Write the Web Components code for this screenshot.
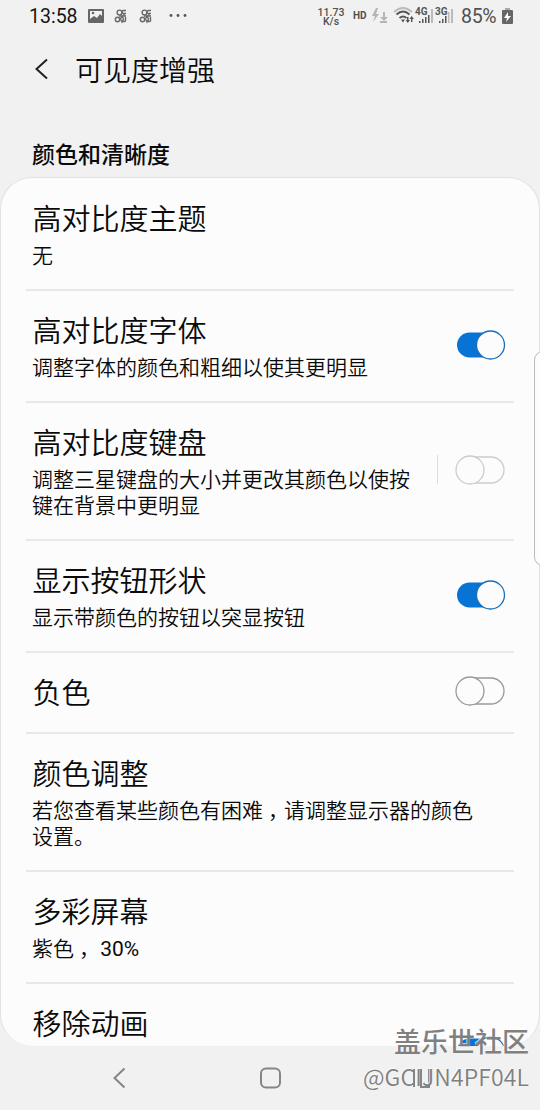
<!DOCTYPE html>
<html lang="zh-CN">
<head>
<meta charset="utf-8">
<title>可见度增强</title>
<style>
  html, body {
    margin: 0;
    width: 540px;
    height: 1110px;
    overflow: hidden;
    background: #f1f1f1;
    color: #0a0a0a;
    font-family: Roboto, "Noto Sans CJK SC", sans-serif;
  }
</style>
</head>
<body>
<settings-screen></settings-screen>

<script>
function define(name, html, setup) {
  customElements.define(name, class extends HTMLElement {
    constructor() {
      super();
      this.attachShadow({ mode: 'open' }).innerHTML = html;
      if (setup) setup(this);
    }
  });
}

define('status-bar', `
  <style>
    :host { display: flex; align-items: center; height: 33px; padding: 0 27px 0 29px; color: #505050; }
    .time { font-size: 19.5px; color: #151515; width: 59px; white-space: nowrap; line-height: 34px; }
    .speed { font-size: 10.5px; font-weight: 500; text-align: center; width: 28px; margin-left: auto; }
    .speed span { display: block; line-height: 9px; }
    .hd { font-size: 10px; font-weight: 700; margin-left: 8px; width: 18px; line-height: 12px; margin-bottom: 1px; }
    .percent { font-size: 19.5px; width: 41px; line-height: 35px; white-space: nowrap; letter-spacing: -.3px; }
    svg { display: block; flex: none; }
  </style>
  <span class="time">13:58</span>
  <svg width="102" height="33">
    <path fill="#666" fill-rule="evenodd" d="M1 9h14q1 0 1 1v12q0 1-1 1H1q-1 0-1-1V10q0-1 1-1zM2 11v8l4-3 3 2 3-4 2 2v-5z"/>
    <circle cx="5" cy="13" r="1.3" fill="#666"/>
    <g id="fan" fill="none" stroke="#6a6a6a" stroke-width="1.4">
      <circle cx="31.5" cy="12.5" r="2.4"/><path d="M38 10.5h-3q-2 2 0 3h3M31 16h7M36 13v3"/>
      <circle cx="29.5" cy="19.5" r="2.2"/><path d="M34 16l-1.500 3 1.500 3 1.500-3zM37.500 17v4q-1 1-3 0"/>
    </g>
    <use href="#fan" x="25"/>
    <g fill="#555"><circle cx="83" cy="15.5" r="1.4"/><circle cx="90" cy="15.5" r="1.4"/><circle cx="97" cy="15.5" r="1.4"/></g>
  </svg>
  <span class="speed"><span>11.73</span><span>K/s</span></span>
  <span class="hd">HD</span>
  <svg width="90" height="33" font-family="Roboto" font-size="10" font-weight="700" fill="#555">
    <path fill="#b5b5b5" d="M5 8L1 16h3L2 22l6-8H5l2-6zM12 12h2v5h3l-4 4-4-4h3zM9 21h7v2H9z"/>
    <g fill="none" stroke-width="1.8">
      <path stroke="#bbb" d="M23 12q9-8 18 0"/>
      <path stroke="#555" d="M25.5 14.5q6.5-6 13 0M28.5 18q3.5-3 7 0"/>
    </g>
    <path d="M30 19.5h4l-2 3zM36 17h1.500v3h1.500l-2.200 3-2.200-3H36zM40 22v-3h-1.500l2.200-3 2.200 3h-1.500v3z"/>
    <text x="44" y="15">4G</text><text x="64" y="15">3G</text>
    <path d="M48 21h1.500v2H48zM51 19h1.500v4H51zM54 17h1.500v6H54zM57 15h1.500v8H57zM68 21h1.500v2H68zM71 19h1.500v4H71zM74 16h1.500v7H74z"/>
    <path fill="#bbb" d="M60 9h2v14h-2zM77 12h1.500v11H77zM80 9h2v14h-2z"/>
  </svg>
  <span class="percent">85%</span>
  <svg width="11" height="33">
    <path fill="#666" d="M1 10h9q1 0 1 1v12q0 1-1 1H1q-1 0-1-1V11q0-1 1-1z"/><path fill="#aaa" d="M3 8h5v2H3z"/>
    <path fill="#fff" d="M6 12L2 18h3l-1 4 5-6H6z"/>
  </svg>
`);

define('app-bar', `
  <style>
    :host { display: flex; align-items: center; height: 72px; padding-left: 34px; font-size: 28px; font-weight: 350; }
    svg { margin-right: 26px; }
  </style>
  <svg width="15" height="22" fill="none" stroke="#222" stroke-width="2"><path d="M13 1.5L2.5 11 13 20.5"/></svg>
  <slot></slot>
`);

define('toggle-switch', `
  <style>
    :host { display: block; width: 50px; height: 30px; margin-bottom: 5px; --line: #999; }
    :host([dim]) { --line: #ccc; }
    svg { display: block; overflow: visible; }
    .on { display: none; }
    :host([checked]) .on { display: inline; }
    :host([checked]) .off { display: none; }
  </style>
  <svg width="50" height="30">
    <g class="on">
      <rect x="2" y="2.5" width="46" height="25" rx="12.5" fill="#0673d5"/>
      <circle cx="35.5" cy="15" r="14" fill="#fcfcfc" stroke="#1b6fb8" stroke-width="1.3"/>
    </g>
    <g class="off" fill="#fcfcfc" stroke="var(--line)" stroke-width="1.3">
      <rect x="3" y="2" width="46" height="26" rx="13"/>
      <circle cx="15" cy="15" r="14"/>
    </g>
  </svg>
`);

define('setting-row', `
  <style>
    :host { display: flex; align-items: center; box-sizing: border-box; margin: 0 25px; padding: 20px 9px 17px 7px; border-bottom: 2px solid #e8e8e8; }
    :host([last]) { border: 0; }
    .text { flex: 1; min-width: 0; }
    .title { font-size: 29px; line-height: 42px; font-weight: 350; margin-left: -.5px; }
    ::slotted(p) { margin: 2px 0 3px -1px; font-size: 21px; line-height: 26px; font-weight: 350; white-space: nowrap; }
  </style>
  <div class="text"><div class="title"></div><slot></slot></div>
  <slot name="control"></slot>
`, el => { el.shadowRoot.querySelector('.title').textContent = el.getAttribute('label'); });

define('nav-bar', `
  <style>
    :host { display: flex; height: 64px; }
    svg { display: block; }
  </style>
  <svg width="540" height="64" fill="none" stroke="#858585" stroke-width="2">
    <path d="M124.5 22.5L114.5 32l10 9.5"/>
    <rect x="261" y="22.5" width="19" height="19" rx="5"/>
    <path d="M414 23v18M421 23v18h8V23"/>
  </svg>
`);

define('water-mark', `
  <style>
    :host { position: absolute; right: 11px; top: 1023px; text-align: right; color: #808080; font-family: "Noto Sans CJK SC", sans-serif; text-shadow: -1px -1px 0 rgba(255,255,255,.7); white-space: nowrap; }
    .name { font-size: 27px; line-height: 36px; font-weight: 500; }
    .id { font-size: 23px; line-height: 34px; font-weight: 350; letter-spacing: .15px; }
  </style>
  <div class="name">盖乐世社区</div>
  <div class="id">@GCIJN4PF04L</div>
`);

define('settings-screen', `
  <style>
    :host { display: flex; flex-direction: column; position: relative; width: 540px; height: 1110px; overflow: hidden; }
    h2 { margin: 0; padding: 34px 0 0 32px; height: 38px; font-size: 23px; line-height: 34px; font-weight: 500; }
    .card { box-sizing: border-box; height: 870px; padding-top: 1px; overflow: hidden; border: 1px solid #e2e2e2; border-bottom: 0; border-radius: 32px; background: #fcfcfc; }
    .control { display: flex; align-items: center; }
    .rule { width: 1px; height: 29px; margin: 0 17px 5px 0; background: #ddd; }
    .comma { margin: 0 -5px 0 5px; }
    .num { font-weight: 400; }
    .edge { position: absolute; left: 534px; top: 351px; width: 20px; height: 213px; border: 1px solid #bbb; border-radius: 9px; background: #fcfcfc; }
  </style>
  <status-bar></status-bar>
  <app-bar>可见度增强</app-bar>
  <h2>颜色和清晰度</h2>
  <div class="card">
    <setting-row label="高对比度主题"><p>无</p></setting-row>
    <setting-row label="高对比度字体"><p>调整字体的颜色和粗细以使其更明显</p><toggle-switch slot="control" checked></toggle-switch></setting-row>
    <setting-row label="高对比度键盘"><p>调整三星键盘的大小并更改其颜色以使按<br>键在背景中更明显</p>
      <div class="control" slot="control"><span class="rule"></span><toggle-switch dim></toggle-switch></div></setting-row>
    <setting-row label="显示按钮形状"><p>显示带颜色的按钮以突显按钮</p><toggle-switch slot="control" checked></toggle-switch></setting-row>
    <setting-row label="负色"><toggle-switch slot="control"></toggle-switch></setting-row>
    <setting-row label="颜色调整"><p>若您查看某些颜色有困难<span class="comma">，</span>请调整显示器的颜色<br>设置。</p></setting-row>
    <setting-row label="多彩屏幕"><p>紫色<span class="comma">，</span> <span class="num">30%</span></p></setting-row>
    <setting-row label="移除动画" last><p>&nbsp;<br>&nbsp;</p><toggle-switch slot="control" checked></toggle-switch></setting-row>
  </div>
  <nav-bar></nav-bar>
  <div class="edge"></div>
  <water-mark></water-mark>
`);
</script>
</body>
</html>
